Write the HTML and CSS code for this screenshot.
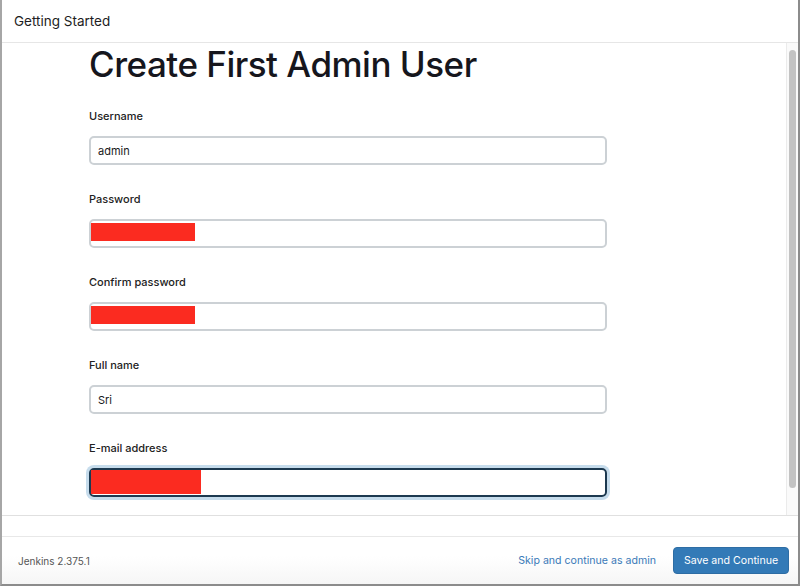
FILE: index.html
```html
<!DOCTYPE html>
<html>
<head>
<meta charset="utf-8">
<link rel="stylesheet" href="styles.css">
</head>
<body>
<div class="dialog">
  <div class="header">Getting Started</div>
  <div class="main">
    <div class="content">
      <h1 class="title">Create First Admin User</h1>
      <div class="field first">
        <div class="label">Username</div>
        <div class="input"><span class="value">admin</span></div>
      </div>
      <div class="field">
        <div class="label">Password</div>
        <div class="input"><span class="redact redact-pw"></span></div>
      </div>
      <div class="field">
        <div class="label">Confirm password</div>
        <div class="input"><span class="redact redact-pw"></span></div>
      </div>
      <div class="field">
        <div class="label">Full name</div>
        <div class="input"><span class="value">Sri</span></div>
      </div>
      <div class="field">
        <div class="label">E-mail address</div>
        <div class="input focused"><span class="redact redact-mail"></span></div>
      </div>
    </div>
    <div class="scrolltrack"><div class="thumb"></div></div>
  </div>
  <div class="gap"></div>
  <div class="footer">
    <div class="version">Jenkins 2.375.1</div>
    <div class="actions">
      <a class="skip">Skip and continue as admin</a>
      <button class="save">Save and Continue</button>
    </div>
  </div>
</div>
</body>
</html>
```
FILE: styles.css
```css
html, body {
  margin: 0;
  padding: 0;
  background: #fff;
}
body {
  font-family: Inter, "Noto Sans", "Liberation Sans", sans-serif;
  color: #1a1a1f;
}
.dialog {
  width: 800px;
  height: 586px;
  box-sizing: border-box;
  border-left: 2px solid #a6a6a6;
  border-right: 2px solid #8c8c8c;
  border-bottom: 2px solid #8c8c8c;
  display: flex;
  flex-direction: column;
  background: #fff;
}
.header {
  height: 43px;
  box-sizing: border-box;
  border-bottom: 1px solid #e6e6e6;
  padding-left: 12px;
  display: flex;
  align-items: center;
  font-size: 13.5px;
  color: #1d1d22;
  flex: none;
}
.main {
  height: 473px;
  box-sizing: border-box;
  border-bottom: 1px solid #e0e0e0;
  display: flex;
  flex: none;
}
.content {
  flex: 1;
  padding-left: 87px;
  overflow: hidden;
}
.title {
  margin: 0;
  font-size: 35px;
  font-weight: 500;
  line-height: 43px;
  color: #16161d;
  letter-spacing: -0.5px;
}
.field {
  width: 518px;
}
.label {
  font-size: 11px;
  font-weight: 500;
  color: #222;
  margin-top: 26px;
  line-height: 16px;
  margin-bottom: 12px;
}
.field.first .label {
  margin-top: 22px;
}
.input {
  height: 29px;
  box-sizing: border-box;
  border: 2px solid #ccd1d5;
  border-radius: 5px;
  display: flex;
  align-items: center;
}
.value {
  font-size: 11px;
  padding-left: 7px;
  color: #1a1a1a;
}
.redact {
  display: block;
  background: #fb2b20;
  align-self: flex-start;
  margin-top: 2px;
}
.redact-pw {
  width: 104px;
  height: 18px;
}
.input.focused {
  border-color: #1c3950;
  box-shadow: 0 0 0 3px #c6dcec;
}
.redact-mail {
  width: 110px;
  height: 24px;
  margin-top: 0;
}
.scrolltrack {
  width: 12px;
  flex: none;
  border-left: 1px solid #ebebeb;
  background: #fafafa;
  padding-top: 7px;
  box-sizing: border-box;
  display: flex;
  justify-content: center;
}
.thumb {
  width: 7px;
  height: 438px;
  border-radius: 4px;
  background: #c3c3c3;
}
.gap {
  height: 20px;
  flex: none;
  border-bottom: 1px solid #e8e8e8;
}
.footer {
  flex: 1;
  display: flex;
  align-items: center;
  justify-content: space-between;
  padding: 0 9px 0 16px;
  background: linear-gradient(#ffffff 40%, #f6f6f6);
}
.version {
  font-size: 10px;
  color: #555;
}
.actions {
  display: flex;
  align-items: center;
  gap: 17px;
}
.skip {
  font-size: 10.6px;
  color: #3b7ab8;
}
.save {
  font-family: inherit;
  font-size: 10.6px;
  color: #fff;
  background: #337ab7;
  border: 1px solid #2e6da4;
  border-radius: 4px;
  height: 27px;
  width: 116px;
  padding: 0;
}
```
